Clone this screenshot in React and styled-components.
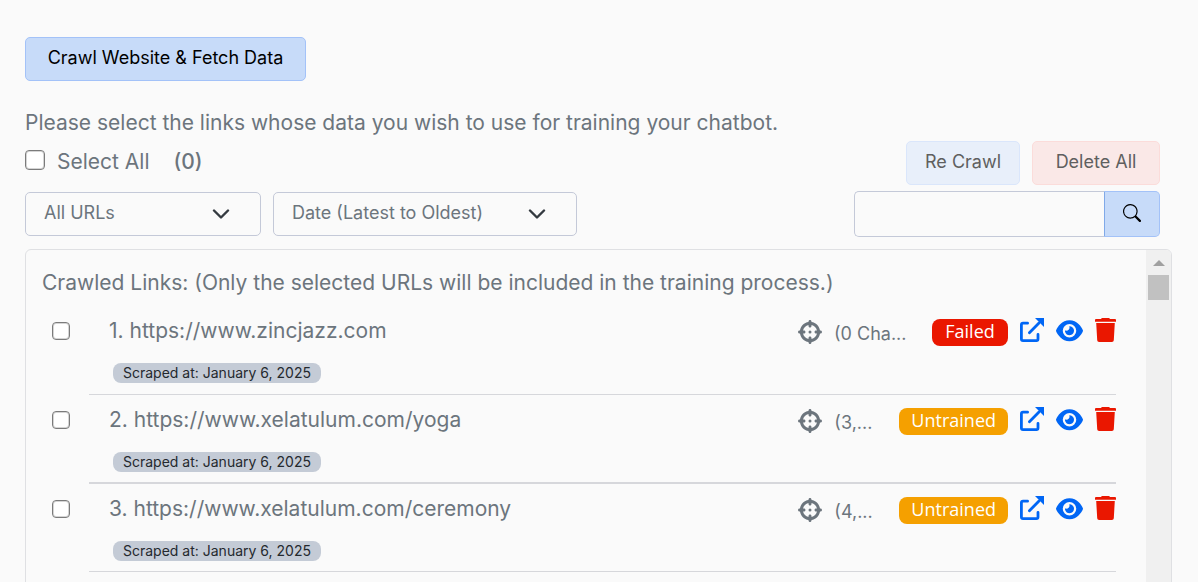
import React from 'react'
import styled, { createGlobalStyle } from 'styled-components'
import { FaCrosshairs, FaEye } from 'react-icons/fa6'
import { BsSearch } from 'react-icons/bs'

const GlobalStyle = createGlobalStyle`
  * { box-sizing: border-box; }
  body {
    margin: 0;
    background: #fafafa;
    color: #6c757d;
    font-family: Inter, "Open Sans", sans-serif;
    font-size: 21px;
    line-height: 28px;
  }
  button, input, select { font-family: inherit; }
`

const Page = styled.main`
  height: 100vh;
  overflow: hidden;
  padding: 37px 26px 0 25px;
`
const Button = styled.button`
  min-width: ${({ $width }) => $width}px;
  height: 44px;
  padding: 0 18px 3px;
  border: 1px solid #a3c2f8;
  border-radius: 5px;
  background: #c7dbf9;
  color: #000;
  font-size: 18px;
  cursor: pointer;
  ${({ $variant }) => $variant === 'light' && `
    background: #e8effa;
    border-color: #dae6fb;
    color: #5f5f5f;
  `}
  ${({ $variant }) => $variant === 'danger' && `
    background: #fae8e7;
    border-color: #fbdcda;
    color: #5f5f5f;
  `}
`
const Intro = styled.p`
  margin: 28px 0 4px;
`
const Bar = styled.div`
  display: flex;
  justify-content: space-between;
  align-items: flex-start;
  padding-right: 12px;
`
const Group = styled.div`
  display: flex;
  gap: 12px;
`
const SelectAll = styled.label`
  display: flex;
  gap: 12px;
  padding-top: 7px;
`
const Count = styled.span`
  margin-left: 12px;
  font-weight: 500;
`
const Check = styled.input`
  appearance: none;
  flex: none;
  width: ${({ $size }) => $size}px;
  height: ${({ $size }) => $size}px;
  margin: 2px 0 0;
  border: 1px solid #7b7b7b;
  border-radius: 4px;
  background: #fff;
  box-shadow: inset 0 0 0 1px #d5d5d5;
`
const Filters = styled(Bar)`
  margin-top: 6px;
`
const Select = styled.select`
  appearance: none;
  width: ${({ $width }) => $width}px;
  height: 44px;
  margin-top: 1px;
  padding: 0 18px 3px;
  border: 1px solid #c4c9d8;
  border-radius: 5px;
  background: transparent;
  color: #6c757d;
  font-size: 18px;
`
const SelectBox = styled.div`
  position: relative;
  display: flex;
  svg {
    position: absolute;
    right: 31px;
    top: 18px;
    pointer-events: none;
  }
`
const Search = styled.form`
  display: flex;
  width: 306px;
  height: 46px;
`
const SearchInput = styled.input`
  flex: 1;
  min-width: 0;
  padding: 0 14px;
  border: 1px solid #c4c9d8;
  border-right: 0;
  border-radius: 5px 0 0 5px;
  background: transparent;
  font-size: 18px;
`
const SearchButton = styled(Button)`
  display: flex;
  align-items: center;
  justify-content: center;
  height: 46px;
  border-left-color: #80a9e8;
  border-radius: 0 5px 5px 0;
`
const Panel = styled.section`
  display: flex;
  margin-top: 12px;
  border: 1px solid #dfe0e3;
  border-radius: 6px;
  overflow: hidden;
`
const Links = styled.div`
  flex: 1;
  min-width: 0;
  padding: 19px 30px 40px 16px;
`
const Heading = styled.p`
  margin: 0 0 9px;
`
const List = styled.ul`
  margin: 0;
  padding: 0;
  list-style: none;
`
const Row = styled.li`
  display: flex;
  gap: 19px;
  padding-left: 10px;
`
const RowCheck = styled(Check)`
  margin-top: 16px;
`
const RowBody = styled.div`
  flex: 1;
  min-width: 0;
  height: ${({ $height }) => $height}px;
  border-bottom: ${({ $line }) => $line}px solid #d6d7db;
`
const RowTop = styled.div`
  display: flex;
  justify-content: space-between;
  align-items: flex-start;
  padding: 11px 0 0 20px;
`
const Url = styled.label`
  display: block;
`
const Info = styled.div`
  display: flex;
  align-items: flex-start;
  gap: 12px;
`
const Target = styled(FaCrosshairs)`
  margin-top: 3px;
`
const Chars = styled.span`
  width: ${({ $wide }) => ($wide ? 86 : 53)}px;
  padding-top: 3px;
  white-space: nowrap;
  font-size: 18px;
`
const Status = styled.span`
  min-width: 76px;
  height: 27px;
  margin-top: 2px;
  padding: 0 12px;
  border-radius: 8px;
  background: ${({ $failed }) => ($failed ? '#ea1700' : '#f5a000')};
  color: #fff;
  font-family: "Open Sans", sans-serif;
  font-size: 18px;
  line-height: 24px;
  text-align: center;
`
const IconButton = styled.button`
  display: flex;
  margin-top: 1px;
  padding: 0;
  border: 0;
  background: none;
  color: ${({ $danger }) => ($danger ? '#ea1700' : '#0066f5')};
  cursor: pointer;
`
const Scraped = styled.span`
  display: block;
  width: fit-content;
  margin: 15px 0 0 24px;
  padding: 0 10px;
  border-radius: 8px;
  background: #c4cbd6;
  color: #24292e;
  font-size: 14px;
  line-height: 20px;
`
const ScrollTrack = styled.div`
  display: flex;
  flex-direction: column;
  align-items: center;
  width: 25px;
  background: #f0f0f0;
`
const ScrollThumb = styled.div`
  width: 21px;
  height: 25px;
  margin-top: 9px;
  background: #c1c1c1;
`
const Arrow = styled.div`
  margin-top: 10px;
  border: 6px solid transparent;
  border-top: 0;
  border-bottom: 6px solid #a0a0a0;
`

const Chevron = () => (
  <svg width="18" height="10" viewBox="0 0 18 10" fill="none" stroke="#343a40" strokeWidth="2.4" strokeLinecap="round" strokeLinejoin="round">
    <path d="M2 1.5l7 7 7-7" />
  </svg>
)

const ExternalIcon = () => (
  <svg width="24" height="24" viewBox="0 0 24 24" fill="none" stroke="currentColor" strokeWidth="2.8" strokeLinecap="round" strokeLinejoin="round">
    <path d="M7.6 5.2H3Q1.4 5.2 1.4 6.8V21Q1.4 22.6 3 22.6H16.4Q18 22.6 18 21V16.4" />
    <path d="M9.4 14.8L19 5" />
    <path d="M15 0h9v9z" fill="currentColor" stroke="none" />
  </svg>
)

const TrashIcon = () => (
  <svg width="21" height="24" viewBox="0 0 21 24" fill="currentColor">
    <path d="M6 1Q6.4 0 7.4 0h6.2q1 0 1.4 1h5q1 0 1 1v1.8H0V2q0-1 1-1z" />
    <path d="M1.2 5h18.6l-1 17.2q-.1 1.8-1.9 1.8H4.1q-1.8 0-1.9-1.8z" />
  </svg>
)

const links = [
  { url: 'https://www.zincjazz.com', chars: '(0 Cha...', status: 'Failed', height: 89, line: 1 },
  { url: 'https://www.xelatulum.com/yoga', chars: '(3,...', status: 'Untrained', height: 89, line: 2 },
  { url: 'https://www.xelatulum.com/ceremony', chars: '(4,...', status: 'Untrained', height: 88, line: 1 },
]

const LinkRow = ({ item, index }) => {
  const failed = item.status === 'Failed'
  return (
    <Row>
      <RowCheck type="checkbox" id={`link-${index}`} $size={18} />
      <RowBody $height={item.height} $line={item.line}>
        <RowTop>
          <Url htmlFor={`link-${index}`}>{index}. {item.url}</Url>
          <Info>
            <Target size={24} />
            <Chars $wide={failed}>{item.chars}</Chars>
            <Status $failed={failed}>{item.status}</Status>
            <IconButton aria-label="Open link"><ExternalIcon /></IconButton>
            <IconButton aria-label="View data"><FaEye size={27} viewBox="0 16 576 512" /></IconButton>
            <IconButton aria-label="Delete" $danger><TrashIcon /></IconButton>
          </Info>
        </RowTop>
        <Scraped>Scraped at: January 6, 2025</Scraped>
      </RowBody>
    </Row>
  )
}

const App = () => {
  return (
    <>
      <GlobalStyle />
      <Page>
        <Button $width={281}>Crawl Website &amp; Fetch Data</Button>
        <Intro>Please select the links whose data you wish to use for training your chatbot.</Intro>
        <Bar>
          <SelectAll>
            <Check type="checkbox" $size={20} />
            Select All
            <Count>(0)</Count>
          </SelectAll>
          <Group>
            <Button $variant="light" $width={114}>Re Crawl</Button>
            <Button $variant="danger" $width={128}>Delete All</Button>
          </Group>
        </Bar>
        <Filters>
          <Group>
            <SelectBox>
              <Select $width={236} aria-label="URL filter"><option>All URLs</option></Select>
              <Chevron />
            </SelectBox>
            <SelectBox>
              <Select $width={304} aria-label="Sort order"><option>Date (Latest to Oldest)</option></Select>
              <Chevron />
            </SelectBox>
          </Group>
          <Search>
            <SearchInput type="text" aria-label="Search links" />
            <SearchButton type="button" $width={56} aria-label="Search"><BsSearch size={18} /></SearchButton>
          </Search>
        </Filters>
        <Panel>
          <Links>
            <Heading>Crawled Links: (Only the selected URLs will be included in the training process.)</Heading>
            <List>
              {links.map((item, i) => <LinkRow key={item.url} item={item} index={i + 1} />)}
            </List>
          </Links>
          <ScrollTrack>
            <Arrow />
            <ScrollThumb />
          </ScrollTrack>
        </Panel>
      </Page>
    </>
  )
}

export default App
